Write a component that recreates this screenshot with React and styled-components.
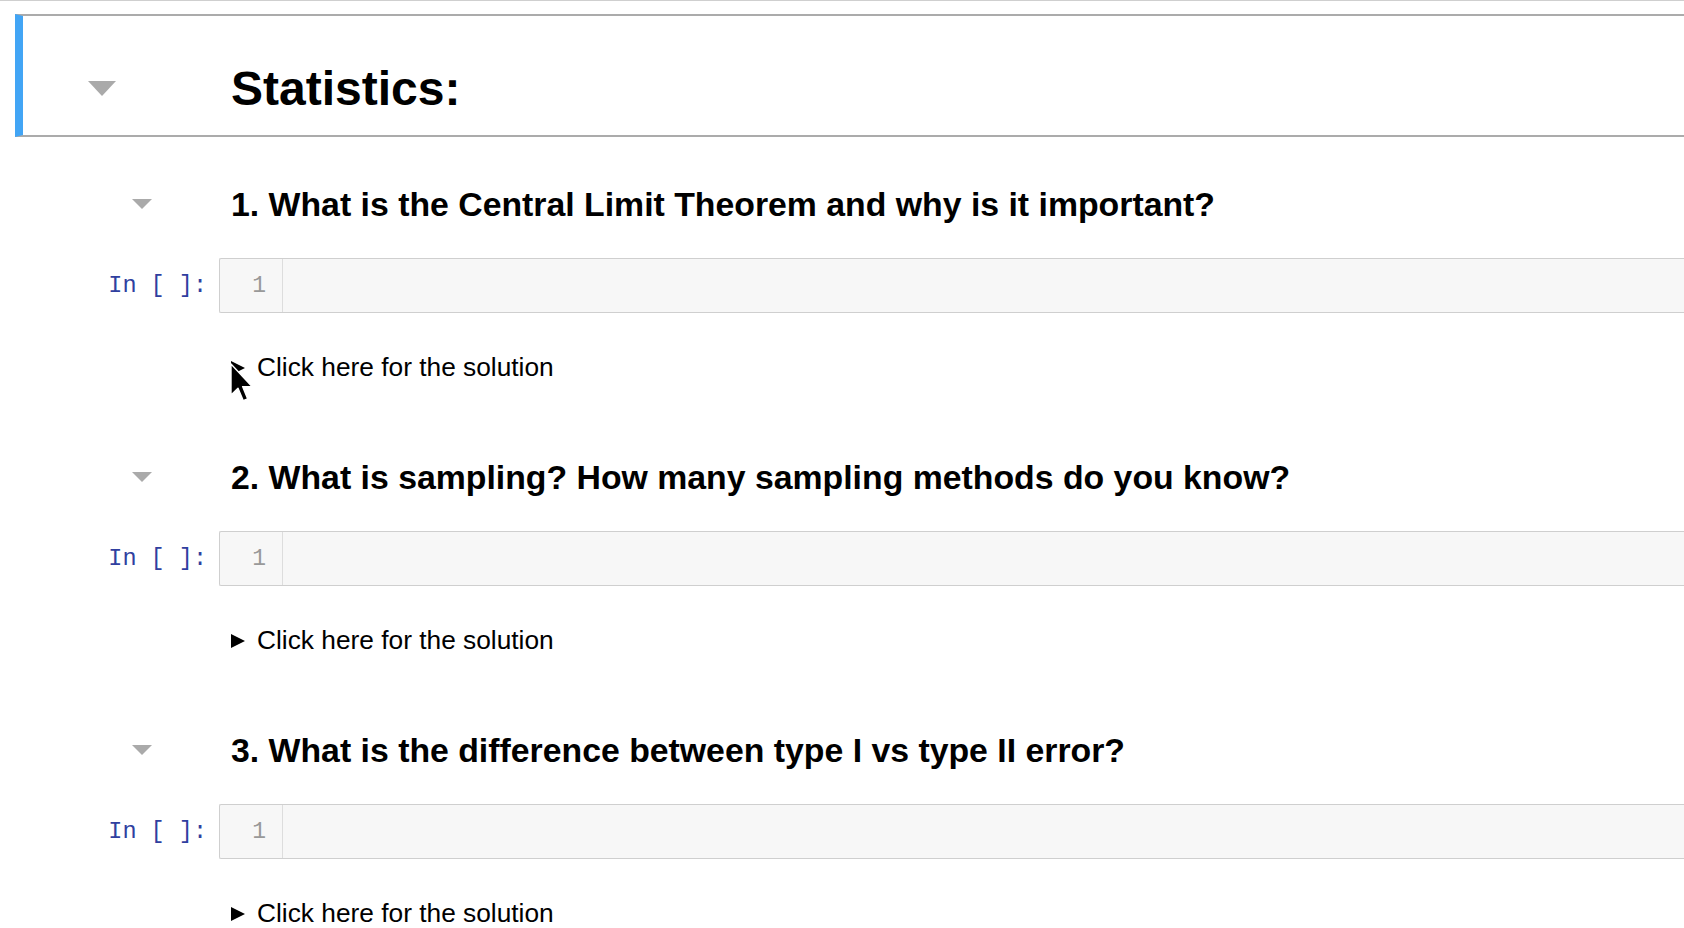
import React from 'react'
import styled, { createGlobalStyle } from 'styled-components'

const GlobalStyle = createGlobalStyle`
  html, body {
    margin: 0;
    padding: 0;
    background: #fff;
    overflow: hidden;
  }
  body {
    font-family: "Liberation Sans", Arial, sans-serif;
    color: #000;
  }
`

const questions = [
  '1. What is the Central Limit Theorem and why is it important?',
  '2. What is sampling? How many sampling methods do you know?',
  '3. What is the difference between type I vs type II error?',
]

const App = () => {
  return (
    <>
      <GlobalStyle />
      <Page>
        <Notebook>
          <Cell selected>
            <Prompt>
              <Toggle big />
            </Prompt>
            <Rendered>
              <Title>Statistics:</Title>
            </Rendered>
          </Cell>

          {questions.map((q, i) => (
            <Block key={i} first={i === 0}>
              <Cell>
                <Prompt>
                  <Toggle />
                </Prompt>
                <Rendered>
                  <Question>{q}</Question>
                </Rendered>
              </Cell>

              <CodeCell>
                <InPrompt>In&nbsp;[&nbsp;]:</InPrompt>
                <Editor>
                  <Gutter>1</Gutter>
                  <Line />
                </Editor>
              </CodeCell>

              <Cell>
                <Prompt />
                <Solution>
                  <Summary>
                    <Arrow />
                    Click here for the solution
                  </Summary>
                </Solution>
              </Cell>
            </Block>
          ))}
        </Notebook>

        {/* mouse pointer sitting over the first solution toggle */}
        <Pointer width="24" height="40" viewBox="0 0 12 20">
          <path
            d="M0.5 0.5 L0.5 16 L4 12.6 L6.6 18.8 L8.8 17.9 L6.3 11.8 L11 11.8 Z"
            fill="#000"
            stroke="#fff"
            strokeWidth="0.7"
            strokeLinejoin="round"
          />
        </Pointer>
      </Page>
    </>
  )
}

export default App

const Page = styled.div`
  position: relative;
  width: 1684px;
  height: 928px;
  overflow: hidden;
  border-top: 1px solid #cfcfcf;
  box-sizing: border-box;
`

const Notebook = styled.div`
  width: 1720px;
  padding: 13px 0 0 15px;
`

const Cell = styled.div`
  display: grid;
  grid-template-columns: 196px 1fr;
  border-left: 8px solid ${p => (p.selected ? '#42a5f5' : 'transparent')};
  border-top: ${p => (p.selected ? '2px solid #ababab' : 'none')};
  border-bottom: ${p => (p.selected ? '2px solid #ababab' : 'none')};
`

const Prompt = styled.div`
  display: flex;
  align-items: center;
`

const Toggle = styled.span`
  width: 0;
  height: 0;
  margin-left: ${p => (p.big ? '65px' : '109px')};
  margin-top: ${p => (p.big ? '26px' : '0')};
  border-left: ${p => (p.big ? '14px' : '10.5px')} solid transparent;
  border-right: ${p => (p.big ? '14px' : '10.5px')} solid transparent;
  border-top: ${p => (p.big ? '15px' : '10px')} solid #aaaaaa;
`

const Rendered = styled.div`
  padding-left: 12px;
`

const Title = styled.h1`
  margin: 0;
  padding: 44px 0 18px;
  font-size: 48px;
  line-height: 57px;
  font-weight: bold;
`

const Block = styled.div`
  margin-top: ${p => (p.first ? '47px' : '74px')};
`

const Question = styled.h2`
  margin: 0;
  font-size: 33.8px;
  line-height: 40px;
  font-weight: bold;
`

const CodeCell = styled.div`
  display: grid;
  grid-template-columns: 196px 1fr;
  align-items: center;
  border-left: 8px solid transparent;
  margin-top: 34px;
`

const InPrompt = styled.div`
  font-family: "Liberation Mono", "DejaVu Sans Mono", monospace;
  font-size: 23.5px;
  color: #303f9f;
  text-align: right;
  padding-right: 12px;
`

const Editor = styled.div`
  display: flex;
  height: 53px;
  background: #f7f7f7;
  border: 1px solid #cfcfcf;
  border-right: none;
  border-radius: 2px 0 0 2px;
`

const Gutter = styled.div`
  width: 46px;
  padding-right: 16px;
  display: flex;
  align-items: center;
  justify-content: flex-end;
  border-right: 1px solid #dddddd;
  font-family: "Liberation Mono", "DejaVu Sans Mono", monospace;
  font-size: 23px;
  color: #999999;
`

const Line = styled.div`
  flex: 1;
`

const Solution = styled.div`
  margin-top: 39px;
  padding-left: 12px;
`

const Summary = styled.div`
  display: flex;
  align-items: center;
  gap: 12px;
  font-size: 26.3px;
  line-height: 31px;
  color: #000;
  cursor: pointer;
`

const Arrow = styled.span`
  width: 0;
  height: 0;
  border-top: 7px solid transparent;
  border-bottom: 7px solid transparent;
  border-left: 14px solid #000;
`

const Pointer = styled.svg`
  position: absolute;
  left: 230px;
  top: 362px;
`
